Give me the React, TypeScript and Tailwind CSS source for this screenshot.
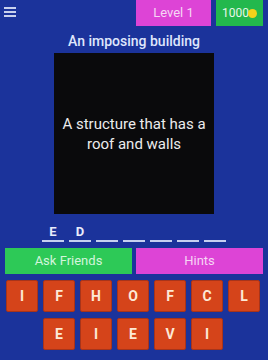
import React from "react";

const row1 = ["I", "F", "H", "O", "F", "C", "L"];
const row2 = ["E", "I", "E", "V", "I"];
const slots = ["E", "D", "", "", "", "", ""];

function Tile({ ch }: { ch: string }) {
  return (
    <div className="w-[32px] h-[32px] bg-[#d5441a] border border-[#a8341a] rounded-[2px] flex items-center justify-center text-[#fde9d6] font-bold text-[14px]">
      {ch}
    </div>
  );
}

export default function App() {
  return (
    <div
      className="w-[268px] h-[360px] bg-[#1b339b] flex flex-col overflow-hidden"
      style={{ fontFamily: "Roboto, 'Noto Sans', sans-serif" }}
    >
      {/* top bar */}
      <div className="flex items-start h-[26px]">
        <div className="ml-[4px] mt-[7px] flex flex-col gap-[2px]">
          <div className="w-[12px] h-[2px] bg-[#c9d2ee]" />
          <div className="w-[12px] h-[2px] bg-[#c9d2ee]" />
          <div className="w-[12px] h-[2px] bg-[#c9d2ee]" />
        </div>
        <div className="ml-auto w-[75px] h-[26px] bg-[#dd44d6] flex items-center justify-center text-[#f6d6f4] text-[13px]">
          Level 1
        </div>
        <div className="ml-[5px] mr-[5px] w-[47px] h-[26px] bg-[#23b84d] flex items-center justify-center text-[#e8f7ea] text-[12px]">
          <span>1000</span>
          <span className="w-[9px] h-[9px] rounded-full bg-[#f2d21b] inline-block -ml-[1px]" />
        </div>
      </div>

      {/* title */}
      <div className="mt-[6px] text-center text-[#dfe6fb] text-[14px] leading-[18px] font-medium">
        An imposing building
      </div>

      {/* black box */}
      <div className="mt-[3px] mx-auto w-[160px] h-[161px] bg-[#0a0a0c] flex items-center justify-center text-center text-[#ececec] text-[15px] leading-[20px] px-[2px]">
        A structure that has a<br />roof and walls
      </div>

      {/* answer slots */}
      <div className="mt-[11px] ml-[42px] flex gap-[5px]">
        {slots.map((s, i) => (
          <div key={i} className="w-[22px] flex flex-col items-center">
            <div className="h-[14px] text-[#e8ecfb] text-[13px] leading-[14px] font-bold">{s}</div>
            <div className="w-[22px] h-[2px] bg-[#c6d0f0] mt-[1px]" />
          </div>
        ))}
      </div>

      {/* buttons */}
      <div className="mt-[6px] flex gap-[4px] px-[5px]">
        <div className="w-[127px] h-[26px] bg-[#2dc957] flex items-center justify-center text-[#d4f5dc] text-[13px]">
          Ask Friends
        </div>
        <div className="w-[127px] h-[26px] bg-[#dd44d6] flex items-center justify-center text-[#f6d6f4] text-[13px]">
          Hints
        </div>
      </div>

      {/* tiles */}
      <div className="mt-[6px] ml-[6px] flex gap-[5px]">
        {row1.map((c, i) => (
          <Tile key={i} ch={c} />
        ))}
      </div>
      <div className="mt-[6px] ml-[43px] flex gap-[5px]">
        {row2.map((c, i) => (
          <Tile key={i} ch={c} />
        ))}
      </div>
    </div>
  );
}
